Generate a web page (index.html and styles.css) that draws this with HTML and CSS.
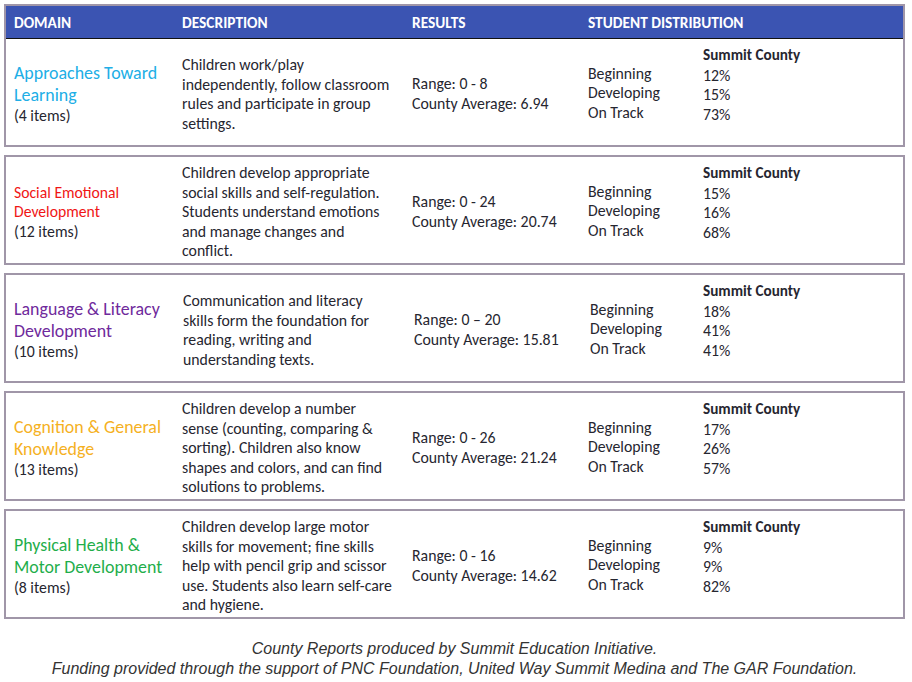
FILE: index.html
```html
<!DOCTYPE html>
<html lang="en">
<head>
<meta charset="utf-8">
<title>Kindergarten Readiness by Domain</title>
<link rel="stylesheet" href="styles.css">
</head>
<body>
<main class="page">
  <section class="box">
    <div class="grid head">
      <div>DOMAIN</div>
      <div>DESCRIPTION</div>
      <div>RESULTS</div>
      <div class="span2">STUDENT DISTRIBUTION</div>
    </div>
    <div class="grid row">
      <div class="domain"><div class="title c-blue">Approaches Toward Learning</div><div>(4 items)</div></div>
      <div class="desc">Children work/play independently, follow classroom rules and participate in group settings.</div>
      <div class="results"><div>Range: 0 - 8</div><div>County Average: 6.94</div></div>
      <div class="labels"><div>Beginning</div><div>Developing</div><div>On Track</div></div>
      <div class="values"><div class="county">Summit County</div><div>12%</div><div>15%</div><div>73%</div></div>
    </div>
  </section>

  <section class="box">
    <div class="grid row">
      <div class="domain"><div class="title small c-red">Social Emotional Development</div><div>(12 items)</div></div>
      <div class="desc">Children develop appropriate social skills and self-regulation. Students understand emotions and manage changes and conflict.</div>
      <div class="results"><div>Range: 0 - 24</div><div>County Average: 20.74</div></div>
      <div class="labels"><div>Beginning</div><div>Developing</div><div>On Track</div></div>
      <div class="values"><div class="county">Summit County</div><div>15%</div><div>16%</div><div>68%</div></div>
    </div>
  </section>

  <section class="box">
    <div class="grid row shift">
      <div class="domain"><div class="title c-purple">Language &amp; Literacy Development</div><div>(10 items)</div></div>
      <div class="desc">Communication and literacy skills form the foundation for reading, writing and understanding texts.</div>
      <div class="results"><div>Range: 0 – 20</div><div>County Average: 15.81</div></div>
      <div class="labels"><div>Beginning</div><div>Developing</div><div>On Track</div></div>
      <div class="values"><div class="county">Summit County</div><div>18%</div><div>41%</div><div>41%</div></div>
    </div>
  </section>

  <section class="box">
    <div class="grid row">
      <div class="domain"><div class="title c-gold">Cognition &amp; General Knowledge</div><div>(13 items)</div></div>
      <div class="desc">Children develop a number sense (counting, comparing &amp; sorting). Children also know shapes and colors, and can find solutions to problems.</div>
      <div class="results"><div>Range: 0 - 26</div><div>County Average: 21.24</div></div>
      <div class="labels"><div>Beginning</div><div>Developing</div><div>On Track</div></div>
      <div class="values"><div class="county">Summit County</div><div>17%</div><div>26%</div><div>57%</div></div>
    </div>
  </section>

  <section class="box">
    <div class="grid row">
      <div class="domain"><div class="title c-green">Physical Health &amp; Motor Development</div><div>(8 items)</div></div>
      <div class="desc">Children develop large motor skills for movement; fine skills help with pencil grip and scissor use. Students also learn self-care and hygiene.</div>
      <div class="results"><div>Range: 0 - 16</div><div>County Average: 14.62</div></div>
      <div class="labels"><div>Beginning</div><div>Developing</div><div>On Track</div></div>
      <div class="values"><div class="county">Summit County</div><div>9%</div><div>9%</div><div>82%</div></div>
    </div>
  </section>

  <footer class="credits">
    <p>County Reports produced by Summit Education Initiative.</p>
    <p>Funding provided through the support of PNC Foundation, United Way Summit Medina and The GAR Foundation.</p>
  </footer>
</main>
</body>
</html>
```

FILE: styles.css
```css
html, body {
  margin: 0;
  padding: 0;
  background: #ffffff;
}

body {
  font-family: Carlito, Lato, "Open Sans", sans-serif;
  font-size: 15.8px;
  color: #262630;
}

.page {
  padding: 4px 0 0 4px;
  width: 901px;
}

.box {
  border: 2px solid #a096a8;
  margin-bottom: 8px;
}

.grid {
  display: grid;
  grid-template-columns: 168px 230px 176px 115px 1fr;
  padding-left: 8px;
}

.head {
  height: 32px;
  align-items: center;
  background: #3b54b2;
  border-bottom: 1px solid #111111;
  color: #ffffff;
  font-weight: 700;
  font-size: 15.4px;
}

.span2 {
  grid-column: span 2;
}

.row {
  box-sizing: border-box;
  height: 106px;
  padding-top: 4px;
  align-items: center;
  line-height: 19.5px;
}

.domain .title {
  font-size: 17.9px;
  line-height: 22px;
}

.domain .title.small {
  font-size: 15.7px;
  line-height: 19.5px;
}

.c-blue { color: #20aee6; }
.c-red { color: #f01515; }
.c-purple { color: #6f2a9c; }
.c-gold { color: #f5b11f; }
.c-green { color: #1fae4b; }

.desc {
  padding-right: 16px;
}

.results div {
  line-height: 20px;
}

.labels, .values {
  align-self: start;
  padding-top: 3px;
}

.labels {
  padding-top: 20.5px;
}

.county {
  font-weight: 700;
  font-size: 15.2px;
}

.shift .desc { padding-left: 1px; }
.shift .results { padding-left: 2px; }
.shift .labels { padding-left: 2px; }

.credits {
  margin-top: 20px;
  text-align: center;
  font-family: "Liberation Sans", Arial, sans-serif;
  font-style: italic;
  font-size: 16px;
  color: #333333;
}

.credits p {
  margin: 0;
  line-height: 19.5px;
}
```
